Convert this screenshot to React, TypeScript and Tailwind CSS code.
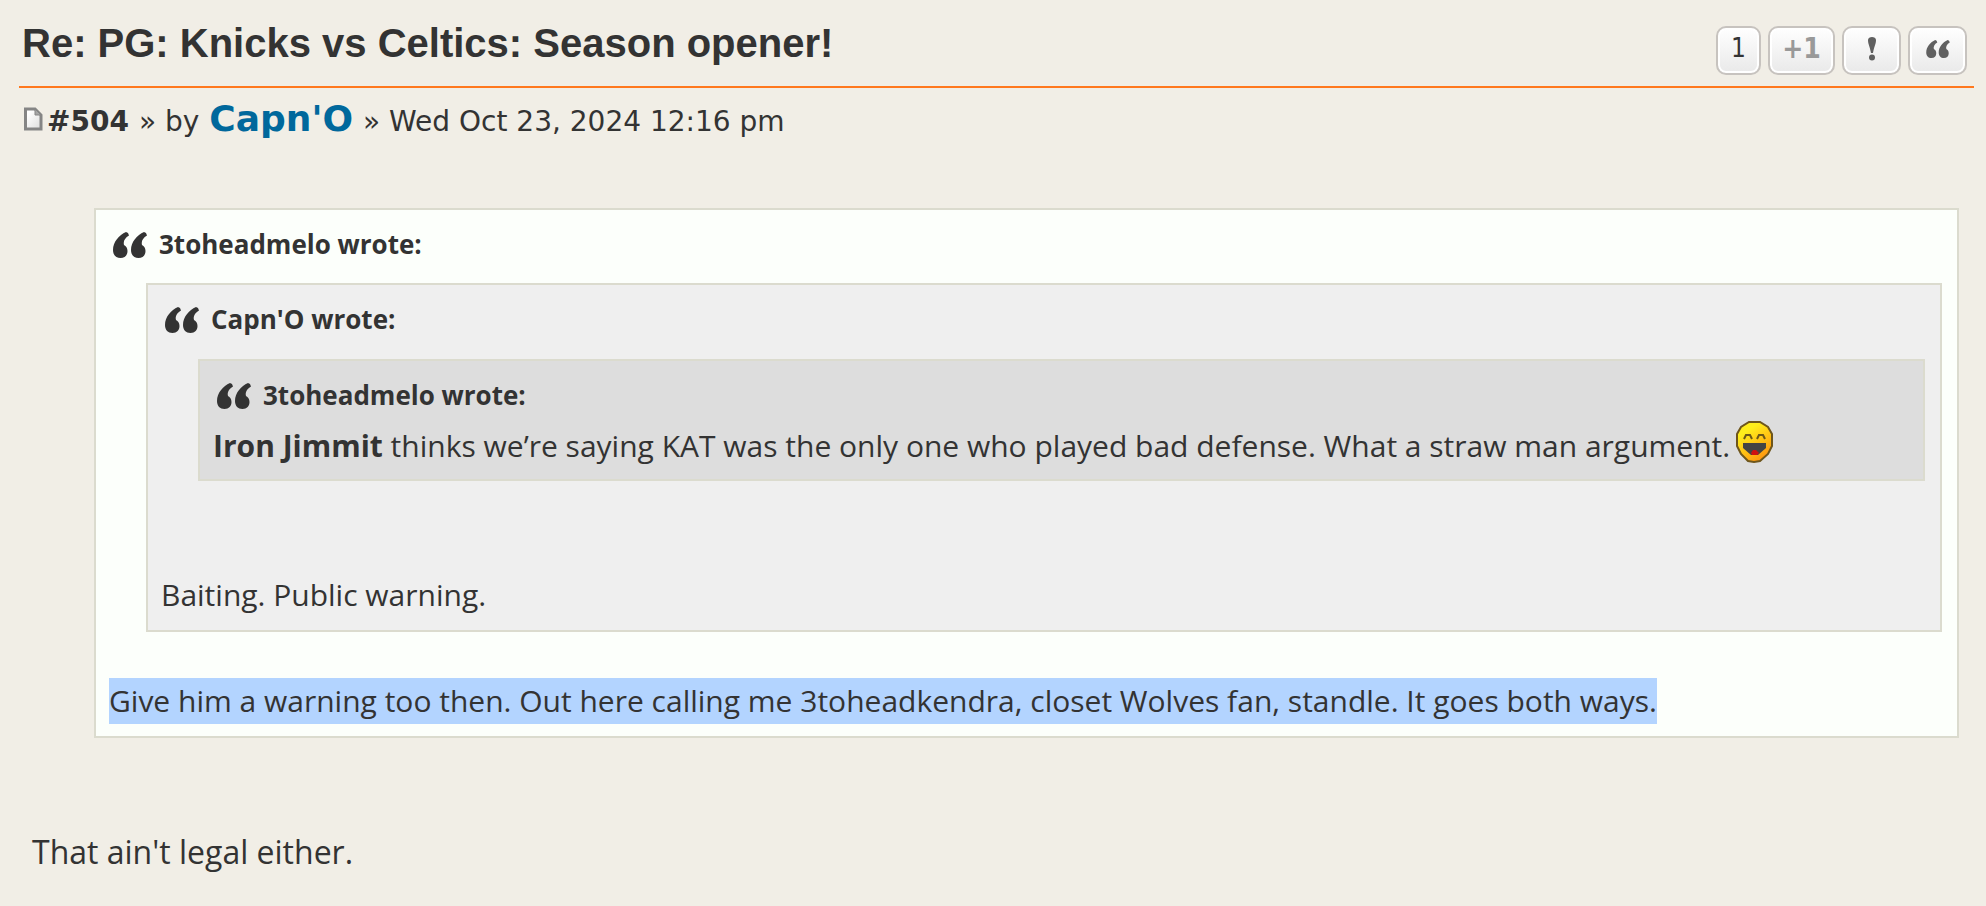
import { ReactNode } from "react";

const QuoteMark = ({ className }: { className: string }) => (
    <svg viewBox="0 0 34 26" className={className} fill="currentColor" aria-hidden="true">
        <path d="M13 0C6 3 0 10 0 18C0 23 3 26 7.500 26C12 26 14.500 23 14.500 19C14.500 16 13 14 11 13C10 9 12 6 16 3.500L15 1Z" />
        <path d="M31 0C24 3 18 10 18 18C18 23 21 26 25.500 26C30 26 32.500 23 32.500 19C32.500 16 31 14 29 13C28 9 30 6 34 3.500L33 1Z" />
    </svg>
);

const ReportMark = () => (
    <svg viewBox="0 0 10 24" className="mb-1 h-6 w-2.5" fill="currentColor" aria-hidden="true">
        <path d="M1 3C1 1 3 0 5 0C7 0 9 1 9 3C9 7 7 10 6 16H4C3 10 1 7 1 3Z" />
        <circle cx="5" cy="20.500" r="3" />
    </svg>
);

const PageIcon = () => (
    <svg viewBox="0 0 20 24" className="h-6 w-5 shrink-0" aria-hidden="true">
        <defs>
            <linearGradient id="paper" x1="0" y1="0" x2="1" y2="1">
                <stop offset="0.2" stopColor="#ffffff" />
                <stop offset="1" stopColor="#dcdcdc" />
            </linearGradient>
        </defs>
        <path d="M2.500 2H12L18 8V22H2.500Z" fill="url(#paper)" stroke="#858585" strokeWidth="3" />
        <path d="M12 2V8H18Z" fill="#a5a5a5" stroke="#858585" strokeWidth="1" />
    </svg>
);

const LaughIcon = () => (
    <svg viewBox="0 0 37 42" className="ml-1.5 inline-block h-[42px] w-[37px] align-[-6px]" role="img" aria-label="laughing">
        <defs>
            <linearGradient id="face" x1="0.2" y1="0" x2="0.8" y2="1">
                <stop offset="0.2" stopColor="#ffee1c" />
                <stop offset="1" stopColor="#ff8c0c" />
            </linearGradient>
        </defs>
        <path d="M13 1H24L32 6L36 13V25L32 33L24 40L18 41L12 40L5 33L1 25V13L5 6Z" fill="url(#face)" stroke="#6e561c" strokeWidth="2" />
        <path d="M8 18L10 14H14L16 18M21 18L23 14H27L29 18" fill="none" stroke="#6b5818" strokeWidth="2" />
        <path d="M7 22H30V27L22 34H15L7 27Z" fill="#444" />
        <path d="M15 32L17 29H20L23 32L21 34H16Z" fill="#d01010" />
    </svg>
);

function PostButton({ label, className, children }: { label: string; className: string; children: ReactNode }) {
    return (
        <button
            aria-label={label}
            className={`flex h-[49px] items-center justify-center rounded-[10px] border-2 border-[#c7c3bf] bg-linear-to-b from-white to-[#e9e9e9] text-[#606060] shadow-[inset_0_0_0_2px_#fff] ${className}`}
        >
            {children}
        </button>
    );
}

function Quote({ author, className, children }: { author: string; className: string; children: ReactNode }) {
    return (
        <blockquote className={`border-2 border-[#dbdbce] pb-3 pl-[13px] pr-[15px] ${className}`}>
            <cite className="flex h-[60px] items-center gap-3 pl-1 pt-2 text-[26px] font-bold not-italic">
                <QuoteMark className="mt-0.5 h-[26px] w-[34px]" />
                {author} wrote:
            </cite>
            {children}
        </blockquote>
    );
}

export default function App() {
    return (
        <main className="min-h-screen bg-[#f1eee6] pl-[19px] pr-3 font-['Open_Sans',sans-serif] text-[30px] leading-[46px] text-[#333]">
            <header className="flex h-[88px] items-start justify-between border-b-2 border-[#ff781e] pl-[3px] pr-[7px]">
                <h2 className="pt-5 font-['Liberation_Sans',sans-serif] text-[40px] font-bold">Re: PG: Knicks vs Celtics: Season opener!</h2>
                <div className="flex gap-[7px] pt-[26px]">
                    <PostButton label="Score" className="w-[45px]">
                        <span className="pb-1.5 font-['DejaVu_Sans_Condensed',sans-serif] text-[26px] leading-8 text-[#333]">1</span>
                    </PostButton>
                    <PostButton label="Like" className="w-[67px]">
                        <span className="pb-1 font-['DejaVu_Sans_Condensed',sans-serif] text-[28px] font-bold leading-8 text-[#999]">+1</span>
                    </PostButton>
                    <PostButton label="Report" className="w-[59px]">
                        <ReportMark />
                    </PostButton>
                    <PostButton label="Quote" className="w-[59px]">
                        <QuoteMark className="mb-1 h-[18px] w-6" />
                    </PostButton>
                </div>
            </header>

            <p className="flex h-[62px] items-baseline gap-[10px] pl-1 pt-2 font-['DejaVu_Sans',sans-serif] text-[28px]">
                <a href="#p504" className="flex items-baseline gap-1 font-bold">
                    <PageIcon />
                    #504
                </a>
                <span>» by</span>
                <a href="#capno" className="text-[36px] font-bold text-[#00689c]">Capn'O</a>
                <span>» Wed Oct 23, 2024 12:16 pm</span>
            </p>

            <Quote author="3toheadmelo" className="ml-[75px] mr-[15px] mt-[58px] bg-[#fcfffb]">
                <Quote author="Capn'O" className="ml-[37px] mt-[13px] bg-[#efefef]">
                    <Quote author="3toheadmelo" className="ml-[37px] mt-[14px] bg-[#ddd]">
                        <p className="h-[46px]">
                            <strong>Iron Jimmit</strong> thinks we’re saying KAT was the only one who played bad defense. What a straw man argument.
                            <LaughIcon />
                        </p>
                    </Quote>
                    <p className="mt-[91px]">Baiting. Public warning.</p>
                </Quote>
                <p className="mt-[46px]">
                    <mark className="inline-block bg-[#b3d4ff] align-top text-[#333]">
                        Give him a warning too then. Out here calling me 3toheadkendra, closet Wolves fan, standle. It goes both ways.
                    </mark>
                </p>
            </Quote>

            <p className="ml-[13px] mt-[91px] text-[32px]">That ain't legal either.</p>
        </main>
    );
}
